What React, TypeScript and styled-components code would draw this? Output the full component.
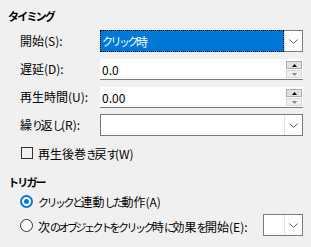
import React from 'react';
import styled, { createGlobalStyle } from 'styled-components';

const GlobalStyle = createGlobalStyle`
  html, body {
    margin: 0;
    padding: 0;
    background: #f0f0f0;
  }
  body {
    font-family: "Noto Sans CJK JP", "Noto Sans", sans-serif;
    font-size: 12px;
    color: #000;
  }
`;

// kana in the reference font are much narrower than the kanji
const Kana = styled.span`
  font-size: 11px;
  letter-spacing: -2.5px;
`;

function JText({ children }: { children: string }) {
  const parts = children.match(/[\u3040-\u30ff]+|[^\u3040-\u30ff]+/g) ?? [];
  return (
    <>
      {parts.map((part, i) =>
        /[\u3040-\u30ff]/.test(part) ? <Kana key={i}>{part}</Kana> : <span key={i}>{part}</span>
      )}
    </>
  );
}

const Panel = styled.div`
  width: 311px;
  height: 247px;
  padding: 8px 8px 0 8px;
  box-sizing: border-box;
  display: flex;
  flex-direction: column;
  overflow: hidden;
`;

const SectionTitle = styled.div<{ $top?: number }>`
  height: 16px;
  line-height: 16px;
  font-weight: 700;
  margin-top: ${(p) => p.$top ?? 0}px;
  ${Kana} {
    letter-spacing: -1.8px;
  }
`;

const FieldList = styled.div`
  display: flex;
  flex-direction: column;
  gap: 6px;
  margin-top: 6px;
  padding-left: 12px;
`;

const Row = styled.div`
  display: flex;
  align-items: flex-end;
  height: 22px;
`;

const Label = styled.div`
  width: 80px;
  flex: none;
  line-height: 22px;
  white-space: nowrap;
`;

const Combo = styled.div<{ $width?: number }>`
  width: ${(p) => p.$width ?? 203}px;
  height: 22px;
  box-sizing: border-box;
  border: 1px solid #7a7a7a;
  background: #fff;
  display: flex;
`;

const ComboValue = styled.div<{ $selected?: boolean }>`
  flex: 1;
  display: flex;
  align-items: center;
  padding-left: 2px;
  background: ${(p) => (p.$selected ? '#0078d7' : '#fff')};
  color: ${(p) => (p.$selected ? '#fff' : '#000')};
  outline: ${(p) => (p.$selected ? '1px dotted #000' : 'none')};
  outline-offset: -1px;
  margin-left: ${(p) => (p.$selected ? '-1px' : '0')};
  margin-top: ${(p) => (p.$selected ? '-1px' : '0')};
  margin-bottom: ${(p) => (p.$selected ? '-1px' : '0')};
`;

const DropButton = styled.div`
  width: 17px;
  flex: none;
  display: flex;
  align-items: center;
  justify-content: center;
  border-left: 1px solid #e3e3e3;
  background: #fff;
`;

const Input = styled.div`
  width: 203px;
  height: 21px;
  box-sizing: border-box;
  background: #fff;
  border-bottom: 1px solid #7a7a7a;
  display: flex;
  align-items: center;
  padding-left: 2px;
  padding-right: 1px;
`;

const InputText = styled.div`
  flex: 1;
`;

const Spinner = styled.div`
  width: 16px;
  display: flex;
  flex-direction: column;
  align-self: flex-start;
  margin-top: 2px;
`;

const SpinButton = styled.div<{ $enabled?: boolean }>`
  height: 8px;
  box-sizing: border-box;
  border: 1px solid ${(p) => (p.$enabled ? '#adadad' : '#d9d9d9')};
  background: ${(p) => (p.$enabled ? '#e1e1e1' : '#efefef')};
  display: flex;
  align-items: center;
  justify-content: center;
  & + & {
    margin-top: 1px;
  }
`;

const CheckRow = styled.label`
  display: flex;
  align-items: center;
  height: 18px;
  margin-top: 8px;
  padding-left: 13px;
  gap: 5px;
`;

const CheckBox = styled.span`
  width: 12px;
  height: 12px;
  box-sizing: border-box;
  border: 1px solid #333;
  background: transparent;
  flex: none;
`;

const RadioList = styled.div`
  display: flex;
  flex-direction: column;
  margin-top: 2px;
  padding-left: 12px;
  gap: 4px;
`;

const RadioRow = styled.div<{ $height?: number }>`
  display: flex;
  align-items: center;
  height: ${(p) => p.$height ?? 18}px;
  gap: 5px;
  white-space: nowrap;
`;

const RadioText = styled.div<{ $shift?: number }>`
  margin-top: ${(p) => p.$shift ?? 0}px;
`;

const Radio = styled.span<{ $checked?: boolean }>`
  width: 13px;
  height: 13px;
  box-sizing: border-box;
  border-radius: 50%;
  flex: none;
  border: ${(p) => (p.$checked ? '2px solid #0078d7' : '1px solid #333')};
  background: #fff;
  display: flex;
  align-items: center;
  justify-content: center;
  &::after {
    content: '';
    display: ${(p) => (p.$checked ? 'block' : 'none')};
    width: 5px;
    height: 5px;
    border-radius: 50%;
    background: #0078d7;
  }
`;

const Spacer = styled.div`
  flex: 1;
`;

const Chevron = () => (
  <svg width="9" height="5" viewBox="0 0 9 5">
    <polyline points="0.5,0.5 4.5,4.5 8.5,0.5" fill="none" stroke="#606060" strokeWidth="1" />
  </svg>
);

const Tri = ({ up, color }: { up?: boolean; color: string }) => (
  <svg width="5" height="3" viewBox="0 0 5 3">
    <polygon points={up ? '0,3 5,3 2.5,0' : '0,0 5,0 2.5,3'} fill={color} />
  </svg>
);

function NumberField({ value }: { value: string }) {
  return (
    <Input>
      <InputText>{value}</InputText>
      <Spinner>
        <SpinButton $enabled>
          <Tri up color="#000" />
        </SpinButton>
        <SpinButton>
          <Tri color="#888" />
        </SpinButton>
      </Spinner>
    </Input>
  );
}

export default function App() {
  return (
    <>
      <GlobalStyle />
      <Panel>
        <SectionTitle>
          <JText>タイミング</JText>
        </SectionTitle>
        <FieldList>
          <Row>
            <Label>開始(S):</Label>
            <Combo>
              <ComboValue $selected>
                <JText>クリック時</JText>
              </ComboValue>
              <DropButton>
                <Chevron />
              </DropButton>
            </Combo>
          </Row>
          <Row>
            <Label>遅延(D):</Label>
            <NumberField value="0.0" />
          </Row>
          <Row>
            <Label>再生時間(U):</Label>
            <NumberField value="0.00" />
          </Row>
          <Row>
            <Label>
              <JText>繰り返し(R):</JText>
            </Label>
            <Combo>
              <ComboValue />
              <DropButton>
                <Chevron />
              </DropButton>
            </Combo>
          </Row>
        </FieldList>
        <CheckRow>
          <CheckBox />
          <span>
            <JText>再生後巻き戻す(W)</JText>
          </span>
        </CheckRow>
        <SectionTitle $top={12}>
          <JText>トリガー</JText>
        </SectionTitle>
        <RadioList>
          <RadioRow>
            <Radio $checked />
            <RadioText>
              <JText>クリックと連動した動作(A)</JText>
            </RadioText>
          </RadioRow>
          <RadioRow $height={22}>
            <Radio />
            <RadioText $shift={2}>
              <JText>次のオブジェクトをクリック時に効果を開始(E):</JText>
            </RadioText>
            <Spacer />
            <Combo $width={40}>
              <ComboValue />
              <DropButton>
                <Chevron />
              </DropButton>
            </Combo>
          </RadioRow>
        </RadioList>
      </Panel>
    </>
  );
}
